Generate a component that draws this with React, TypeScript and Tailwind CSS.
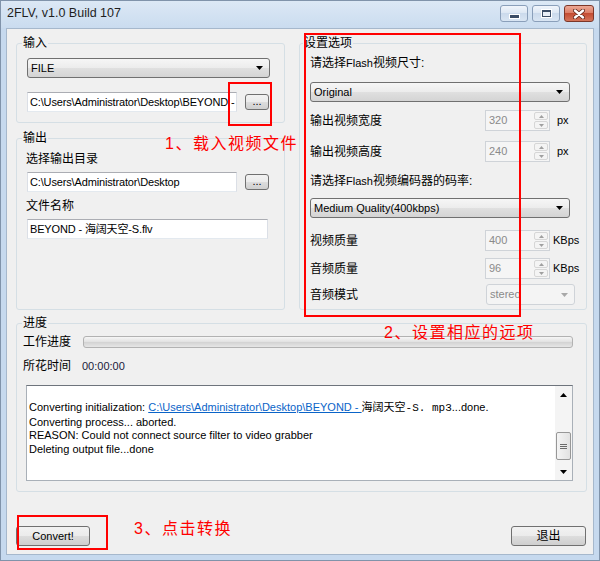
import React from "react";

const btn =
  "flex items-center justify-center border border-[#707070] rounded-[3px] bg-[linear-gradient(#f2f2f2,#ebebeb_50%,#dddddd_50%,#cfcfcf)]";
const textbox =
  "h-[20px] flex items-center bg-white border border-[#dbdfe6] border-t-[#abadb3] border-b-[#e3e9ef] pl-[2px] text-[11px] tracking-[-0.15px] whitespace-nowrap overflow-hidden";

const GroupBox = ({
  title,
  className,
  legendClass,
  children,
}: {
  title: string;
  className: string;
  legendClass: string;
  children: React.ReactNode;
}) => (
  <fieldset className={`border border-[#d5dfe5] rounded-[3px] ${className}`}>
    <legend className={`px-[1px] text-[12px] leading-[14px] ${legendClass}`}>{title}</legend>
    {children}
  </fieldset>
);

const Arrow = ({ color = "#000" }: { color?: string }) => (
  <svg width="7" height="4" viewBox="0 0 7 4">
    <path d="M0 0h7L3.5 4z" fill={color} />
  </svg>
);

const Combo = ({ text, className }: { text: string; className: string }) => (
  <div
    className={`h-[20px] flex items-center justify-between border border-[#707070] rounded-[3px] bg-[linear-gradient(#f6f6f6,#ececec_50%,#e0e0e0_50%,#d4d4d4)] pl-[3px] pr-[6px] text-[11px] ${className}`}
  >
    <span>{text}</span>
    <Arrow />
  </div>
);

const Spin = ({ value, unit, unitClass }: { value: string; unit: string; unitClass: string }) => (
  <>
    <div className="flex h-[21px] w-[65px] border border-[#cfd3d8] bg-[#f5f5f5]">
      <div className="flex-1 flex items-center pl-[3px] text-[11px] text-[#8a8a8a]">{value}</div>
      <div className="w-[16px] flex flex-col gap-[1px] p-[1px]">
        <div className="flex-1 flex items-center justify-center border border-[#d6d6d6] rounded-[2px] bg-[#f4f4f4]">
          <svg width="5" height="3" viewBox="0 0 5 3">
            <path d="M0 3h5L2.5 0z" fill="#a0a0a0" />
          </svg>
        </div>
        <div className="flex-1 flex items-center justify-center border border-[#d6d6d6] rounded-[2px] bg-[#f4f4f4]">
          <svg width="5" height="3" viewBox="0 0 5 3">
            <path d="M0 0h5L2.5 3z" fill="#a0a0a0" />
          </svg>
        </div>
      </div>
    </div>
    <span className={`text-[11px] ${unitClass}`}>{unit}</span>
  </>
);

const Row = ({ label, className, children }: { label: string; className: string; children: React.ReactNode }) => (
  <div className={`flex items-center h-[21px] ${className}`}>
    <span className="w-[175px] text-[12px]">{label}</span>
    {children}
  </div>
);

const App: React.FC = () => {
  return (
    <div className="w-[600px] h-[561px] relative flex flex-col bg-[#c6d9ee] border border-[#8093aa] text-black font-['Liberation_Sans','Noto_Sans_CJK_SC',sans-serif]">
      {/* Title bar */}
      <div className="h-[27px] flex justify-between pl-[6px] pr-[5px] bg-[linear-gradient(#dce8f5,#cadcef)]">
        <span className="text-[12.5px] leading-[25px] text-[#1e1e1e]">2FLV, v1.0 Build 107</span>
        <div className="flex gap-[4px] mt-[4px] h-[17px]">
          <div className="w-[28px] rounded-[3px] border border-[#8a9fba] bg-[linear-gradient(#f1f5fb,#dbe6f3_50%,#cbdaec_50%,#d9e5f3)] flex items-end justify-center pb-[3px]">
            <div className="w-[9px] h-[3px] bg-[#3b4d66] outline outline-1 outline-white" />
          </div>
          <div className="w-[28px] rounded-[3px] border border-[#8a9fba] bg-[linear-gradient(#f1f5fb,#dbe6f3_50%,#cbdaec_50%,#d9e5f3)] flex items-center justify-center">
            <div className="w-[9px] h-[7px] border border-t-2 border-[#3b4d66] bg-[#e9eff7] outline outline-1 outline-white" />
          </div>
          <div className="w-[30px] rounded-[3px] border border-[#7c3729] bg-[linear-gradient(#eca896,#da7b63_50%,#c44d33_50%,#d4745a)] flex items-center justify-center">
            <svg width="12" height="10" viewBox="0 0 12 10">
              <path d="M2 1.5l8 7M10 1.5l-8 7" stroke="#5b2216" strokeWidth="4" strokeLinecap="round" />
              <path d="M2 1.5l8 7M10 1.5l-8 7" stroke="#fff" strokeWidth="2.4" strokeLinecap="round" />
            </svg>
          </div>
        </div>
      </div>

      {/* Client area */}
      <div className="flex-1 mx-[5px] mb-[5px] flex flex-col bg-[#f0f0f0] border border-[#a6b8cc] pt-[7px] pl-[9px] pr-[6px]">
        <div className="flex gap-[14px] h-[274px]">
          <div className="w-[269px] flex flex-col gap-[8px]">
            <GroupBox title="输入" className="h-[87px]" legendClass="ml-[5px]">
              <div className="pl-[10px]">
                <Combo text="FILE" className="mt-[8px] w-[243px]" />
                <div className="mt-[14px] flex items-center">
                  <div className={`${textbox} w-[210px]`}>C:\Users\Administrator\Desktop\BEYOND -</div>
                  <div className={`${btn} ml-[8px] w-[24px] h-[16px] text-[11px] leading-none pb-[2px]`}>...</div>
                </div>
              </div>
            </GroupBox>
            <GroupBox title="输出" className="h-[179px]" legendClass="ml-[5px]">
              <div className="pl-[10px]">
                <div className="mt-[6px] -ml-[1px] text-[12px] leading-[16px]">选择输出目录</div>
                <div className="mt-[5px] flex items-center">
                  <div className={`${textbox} w-[210px]`}>C:\Users\Administrator\Desktop</div>
                  <div className={`${btn} ml-[8px] w-[24px] h-[16px] text-[11px] leading-none pb-[2px]`}>...</div>
                </div>
                <div className="mt-[6px] -ml-[1px] text-[12px] leading-[16px]">文件名称</div>
                <div className={`${textbox} mt-[5px] w-[241px]`}>BEYOND - 海阔天空-S.flv</div>
              </div>
            </GroupBox>
          </div>

          <GroupBox title="设置选项" className="flex-1 h-[274px]" legendClass="ml-[3px]">
            <div className="pl-[10px]">
              <div className="mt-[5px] text-[12px] leading-[16px]">
                请选择<span className="text-[11px]">Flash</span>视频尺寸:
              </div>
              <Combo text="Original" className="mt-[11px] w-[260px]" />
              <Row label="输出视频宽度" className="mt-[8px]">
                <Spin value="320" unit="px" unitClass="ml-[7px]" />
              </Row>
              <Row label="输出视频高度" className="mt-[10px]">
                <Spin value="240" unit="px" unitClass="ml-[7px]" />
              </Row>
              <div className="mt-[11px] text-[12px] leading-[16px]">
                请选择<span className="text-[11px]">Flash</span>视频编码器的码率:
              </div>
              <Combo text="Medium Quality(400kbps)" className="mt-[9px] w-[260px]" />
              <Row label="视频质量" className="mt-[12px]">
                <Spin value="400" unit="KBps" unitClass="ml-[3px]" />
              </Row>
              <Row label="音频质量" className="mt-[7px]">
                <Spin value="96" unit="KBps" unitClass="ml-[3px]" />
              </Row>
              <Row label="音频模式" className="mt-[5px]">
                <div className="ml-[1px] w-[89px] h-[21px] flex items-center justify-between border border-[#cfd3d8] rounded-[3px] bg-[#f4f4f4] pl-[3px] pr-[6px] text-[11px] text-[#8a8a8a]">
                  <span>stereo</span>
                  <Arrow color="#a8a8a8" />
                </div>
              </Row>
            </div>
          </GroupBox>
        </div>

        <GroupBox title="进度" className="mt-[6px] h-[176px]" legendClass="ml-[5px]">
          <div className="pl-[6px]">
            <div className="mt-[4px] h-[16px] flex items-center">
              <span className="w-[60px] text-[12px]">工作进度</span>
              <div className="w-[490px] h-[12px] rounded-[3px] border border-[#b2b2b2] bg-[linear-gradient(#f6f6f6,#e3e3e3_45%,#d4d4d4_55%,#e6e6e6)]" />
            </div>
            <div className="mt-[8px] h-[16px] flex items-center">
              <span className="w-[59px] text-[12px]">所花时间</span>
              <span className="text-[11px] text-[#1a1a3a]">00:00:00</span>
            </div>
            <div className="mt-[11px] ml-[3px] w-[547px] h-[96px] flex border border-[#a9b0b8] border-t-[#6e747c] bg-white">
              <div className="flex-1 pl-[2px] pt-[15px] text-[11px] leading-[13.7px] whitespace-nowrap overflow-hidden">
                <div>
                  Converting initialization:{" "}
                  <span className="text-[#0a64c8] underline">C:\Users\Administrator\Desktop\BEYOND - </span>
                  <span className="font-['Liberation_Mono','Noto_Sans_CJK_SC',monospace] text-[11px]">海阔天空-S. mp3</span>
                  ...done.
                </div>
                <div>Converting process... aborted.</div>
                <div>REASON: Could not connect source filter to video grabber</div>
                <div>Deleting output file...done</div>
              </div>
              <div className="w-[17px] flex flex-col bg-[#f4f4f4]">
                <div className="h-[17px] flex items-center justify-center">
                  <svg width="7" height="4" viewBox="0 0 7 4">
                    <path d="M0 4h7L3.5 0z" fill="#000" />
                  </svg>
                </div>
                <div className="flex-1">
                  <div className="mt-[29px] mx-[1px] h-[28px] rounded-[2px] border border-[#979797] bg-[linear-gradient(to_right,#f4f4f4,#e2e2e2)] flex flex-col items-center justify-center gap-[1px]">
                    <div className="w-[7px] h-[1px] bg-[#6b6b6b]" />
                    <div className="w-[7px] h-[1px] bg-[#6b6b6b]" />
                    <div className="w-[7px] h-[1px] bg-[#6b6b6b]" />
                  </div>
                </div>
                <div className="h-[17px] flex items-center justify-center">
                  <Arrow />
                </div>
              </div>
            </div>
          </div>
        </GroupBox>

        <div className="mt-[34px] flex justify-between pr-[1px]">
          <div className={`${btn} w-[74px] h-[20px] text-[11px]`}>Convert!</div>
          <div className={`${btn} w-[75px] h-[20px] text-[12px]`}>退出</div>
        </div>
      </div>

      {/* Red annotations */}
      <div className="absolute left-[227px] top-[81px] w-[44px] h-[44px] border-2 border-[#ff0000]" />
      <div className="absolute left-[164px] top-[134px] text-[16px] leading-[18px] tracking-[1.5px] text-[#ff0000]">1、载入视频文件</div>
      <div className="absolute left-[303px] top-[32px] w-[217px] h-[284px] border-2 border-[#ff0000]" />
      <div className="absolute left-[383px] top-[323px] text-[16px] leading-[18px] tracking-[1.5px] text-[#ff0000]">2、设置相应的远项</div>
      <div className="absolute left-[16px] top-[514px] w-[91px] h-[35px] border-2 border-[#ff0000]" />
      <div className="absolute left-[133px] top-[519px] text-[16px] leading-[18px] tracking-[1.5px] text-[#ff0000]">3、点击转换</div>
    </div>
  );
};

export default App;
